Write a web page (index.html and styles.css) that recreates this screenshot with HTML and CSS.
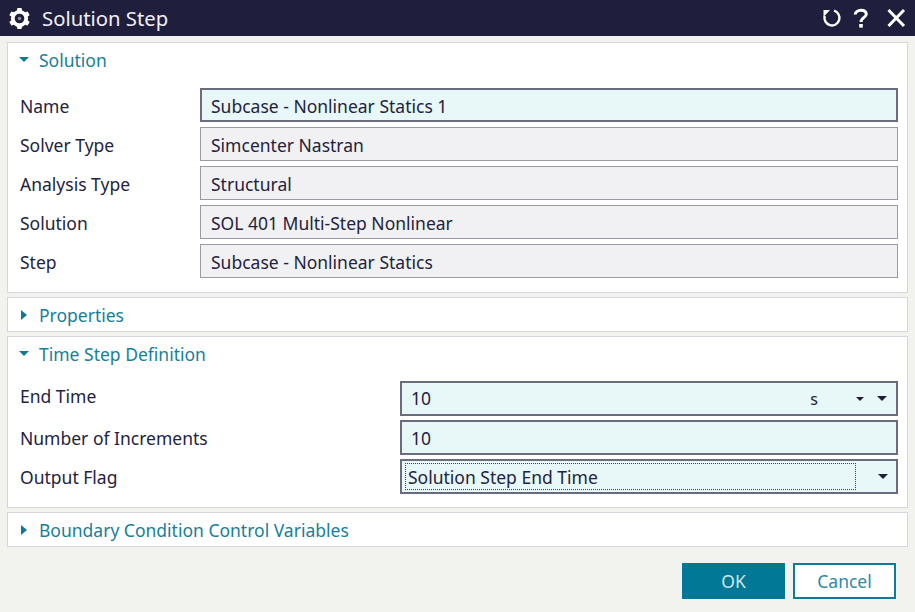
FILE: index.html
```html
<!DOCTYPE html>
<html lang="en">
<head>
  <meta charset="UTF-8">
  <title>Solution Step</title>
  <link rel="stylesheet" href="styles.css">
</head>
<body>
  <div class="titlebar">
    <svg class="gear" viewBox="0 0 24 24" width="23" height="23">
      <g fill="#fff">
        <rect x="9.500" y="1" width="5" height="22" rx="1"/>
        <rect x="9.500" y="1" width="5" height="22" rx="1" transform="rotate(60 12 12)"/>
        <rect x="9.500" y="1" width="5" height="22" rx="1" transform="rotate(120 12 12)"/>
        <circle cx="12" cy="12" r="9"/>
      </g>
      <circle cx="12" cy="12" r="5" fill="#1f1f3d"/>
      <circle cx="12" cy="12" r="1.800" fill="#8a8a9c"/>
    </svg>
    <span class="title">Solution Step</span>
    <div class="tools">
      <svg viewBox="0 0 20 20" width="20" height="20">
        <path fill="none" stroke="#fff" stroke-width="2.400" d="M12 2.700 A7.500 7.500 0 1 1 2.700 8"/>
        <path fill="#fff" d="M1.500 2 L8 2 L1.500 9 Z"/>
      </svg>
      <svg viewBox="0 0 20 20" width="20" height="20">
        <path fill="none" stroke="#fff" stroke-width="3" d="M4.200 6.500 C4.500 1 15.300 .8 15.300 6 C15.300 9.800 10 9.500 10 14"/>
        <rect x="8.200" y="16" width="3.600" height="3.600" fill="#fff"/>
      </svg>
      <svg class="close" viewBox="0 0 20 20" width="20" height="20">
        <path fill="none" stroke="#fff" stroke-width="3" d="M2.500 2 L18 18 M18 2 L2.500 18"/>
      </svg>
    </div>
  </div>

  <div class="content">
    <section class="panel panel-solution">
      <div class="panel-head"><i class="arrow-down"></i>Solution</div>
      <div class="rows wide-label">
        <div class="row"><label>Name</label><div class="field active">Subcase - Nonlinear Statics 1</div></div>
        <div class="row"><label>Solver Type</label><div class="field">Simcenter Nastran</div></div>
        <div class="row"><label>Analysis Type</label><div class="field">Structural</div></div>
        <div class="row"><label>Solution</label><div class="field">SOL 401 Multi-Step Nonlinear</div></div>
        <div class="row"><label>Step</label><div class="field">Subcase - Nonlinear Statics</div></div>
      </div>
    </section>

    <section class="panel">
      <div class="panel-head"><i class="arrow-right"></i>Properties</div>
    </section>

    <section class="panel panel-time">
      <div class="panel-head"><i class="arrow-down"></i>Time Step Definition</div>
      <div class="rows long-label">
        <div class="row">
          <label class="label-high">End Time</label>
          <div class="field active">
            <span class="grow value-high">10</span>
            <span class="unit">s</span>
            <i class="caret small"></i>
            <i class="caret"></i>
          </div>
        </div>
        <div class="row"><label>Number of Increments</label><div class="field active">10</div></div>
        <div class="row">
          <label>Output Flag</label>
          <div class="field active select">
            <span class="focus grow">Solution Step End Time</span>
            <i class="caret"></i>
          </div>
        </div>
      </div>
    </section>

    <section class="panel">
      <div class="panel-head"><i class="arrow-right"></i>Boundary Condition Control Variables</div>
    </section>
  </div>

  <div class="buttons">
    <button class="btn primary">OK</button>
    <button class="btn">Cancel</button>
  </div>
</body>
</html>
```

FILE: styles.css
```css
* { box-sizing: border-box; }

html, body { height: 100%; }

body {
  margin: 0;
  background: #f2f2ef;
  font-family: "Noto Sans", "Open Sans", sans-serif;
  font-size: 17.500px;
  color: #23233f;
  overflow: hidden;
}

/* Title bar */
.titlebar {
  display: flex;
  align-items: center;
  height: 36px;
  padding: 0 9px 0 8px;
  background: #1f1f3d;
  color: #fff;
}

.title { margin-left: 11px; font-size: 20.300px; color: #f0eff5; }

.tools { display: flex; gap: 9px; margin-left: auto; }

.tools .close { margin-left: 6px; }

/* Panels */
.content {
  display: flex;
  flex-direction: column;
  gap: 4px;
  padding: 6px 7px 0 7px;
}

.panel {
  background: #fff;
  border: 1.500px solid #d6d6dc;
  height: 35px;
}

.panel-solution { height: 251px; }
.panel-time { height: 172px; }

.panel-head {
  display: flex;
  align-items: center;
  height: 33px;
  padding-left: 11px;
  color: #16809c;
  font-size: 17.500px;
}

.arrow-down {
  width: 0;
  height: 0;
  margin-right: 10px;
  border-left: 5.500px solid transparent;
  border-right: 5.500px solid transparent;
  border-top: 5.500px solid #0f7a96;
}

.arrow-right {
  width: 0;
  height: 0;
  margin: 0 12px 0 2px;
  border-top: 5.500px solid transparent;
  border-bottom: 5.500px solid transparent;
  border-left: 6px solid #0f7a96;
}

/* Rows */
.rows {
  display: flex;
  flex-direction: column;
  gap: 5px;
  padding: 12px 9px 0 12px;
}

.panel-time .rows { padding-top: 11px; gap: 4px; }

.row { display: flex; align-items: center; height: 34px; }

.panel-time .row { height: 35px; }

.row label { flex: none; }

.wide-label label { width: 180px; padding-top: 1px; }
.wide-label .field { padding-top: 1px; }
.long-label label { width: 380px; }

.label-high { position: relative; top: -3px; }

.field {
  display: flex;
  align-items: center;
  flex: 1;
  height: 100%;
  padding: 0 9px 0 10px;
  background: #f1f1f3;
  border: 1.500px solid #9a9aa6;
}

.field.active {
  background: #e8f7f8;
  border: 2px solid #6c6c80;
  padding-left: 9px;
}

.field.select { padding: 0 8px 0 3px; }

.grow { flex: 1; }

.value-high { position: relative; top: -1px; }

.unit { margin-right: 38px; font-size: 16px; }

.caret {
  width: 0;
  height: 0;
  border-left: 5.500px solid transparent;
  border-right: 5.500px solid transparent;
  border-top: 5.500px solid #1f1f3d;
}

.caret.small {
  margin-right: 13px;
  border-left-width: 4px;
  border-right-width: 4px;
  border-top-width: 4.500px;
}

.focus {
  display: flex;
  align-items: center;
  height: 27px;
  margin-right: 22px;
  padding-left: 2px;
  border: 1px dotted #3c3c55;
}

/* Buttons */
.buttons {
  display: flex;
  justify-content: flex-end;
  gap: 8px;
  padding: 16px 19px 0 0;
}

.btn {
  width: 103px;
  height: 36px;
  background: #fff;
  border: 2px solid #0e7c99;
  color: #2d8aa5;
  font: inherit;
  font-size: 17.500px;
  padding: 0;
}

.btn.primary { background: #007896; border-color: #007896; color: #cfe6ec; }
```
